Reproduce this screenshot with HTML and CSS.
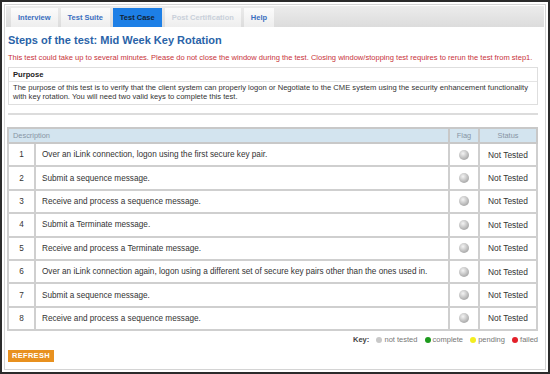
FILE: index.html
```html
<!DOCTYPE html>
<html>

<head>
    <meta name="viewport" content="width=device-width, initial-scale=1">
    <title>
        Steps of the test
    </title>
    <link rel="stylesheet" href="styles.css">
</head>

<body>
    <div class="frame">
        <div class="page">

            <div class="tabs">
                <span class="tab">Interview</span>
                <span class="tab">Test Suite</span>
                <span class="tab active">Test Case</span>
                <span class="tab disabled">Post Certification</span>
                <span class="tab">Help</span>
            </div>

            <div class="content">
                <h1 class="title">Steps of the test: Mid Week Key Rotation</h1>
                <p class="warning">This test could take up to several minutes. Please do not close the window during the test. Closing window/stopping test requires to rerun the test from step1.</p>

                <div class="purpose">
                    <div class="purpose-head">Purpose</div>
                    <div class="purpose-body">The purpose of this test is to verify that the client system can properly logon or Negotiate to the CME system using the security enhancement functionality with key rotation. You will need two valid keys to complete this test.</div>
                </div>

                <hr class="sep">

                <table class="steps">
                    <thead>
                        <tr>
                            <th colspan="2" class="th-desc">Description</th>
                            <th class="th-flag">Flag</th>
                            <th class="th-status">Status</th>
                        </tr>
                    </thead>
                    <tbody>
                        <tr>
                            <td class="num">1</td>
                            <td class="desc">Over an iLink connection, logon using the first secure key pair.</td>
                            <td class="flag"><span class="ball"></span></td>
                            <td class="status">Not Tested</td>
                        </tr>
                        <tr>
                            <td class="num">2</td>
                            <td class="desc">Submit a sequence message.</td>
                            <td class="flag"><span class="ball"></span></td>
                            <td class="status">Not Tested</td>
                        </tr>
                        <tr>
                            <td class="num">3</td>
                            <td class="desc">Receive and process a sequence message.</td>
                            <td class="flag"><span class="ball"></span></td>
                            <td class="status">Not Tested</td>
                        </tr>
                        <tr>
                            <td class="num">4</td>
                            <td class="desc">Submit a Terminate message.</td>
                            <td class="flag"><span class="ball"></span></td>
                            <td class="status">Not Tested</td>
                        </tr>
                        <tr>
                            <td class="num">5</td>
                            <td class="desc">Receive and process a Terminate message.</td>
                            <td class="flag"><span class="ball"></span></td>
                            <td class="status">Not Tested</td>
                        </tr>
                        <tr>
                            <td class="num">6</td>
                            <td class="desc">Over an iLink connection again, logon using a different set of secure key pairs other than the ones used in.</td>
                            <td class="flag"><span class="ball"></span></td>
                            <td class="status">Not Tested</td>
                        </tr>
                        <tr>
                            <td class="num">7</td>
                            <td class="desc">Submit a sequence message.</td>
                            <td class="flag"><span class="ball"></span></td>
                            <td class="status">Not Tested</td>
                        </tr>
                        <tr>
                            <td class="num">8</td>
                            <td class="desc">Receive and process a sequence message.</td>
                            <td class="flag"><span class="ball"></span></td>
                            <td class="status">Not Tested</td>
                        </tr>
                    </tbody>
                </table>

                <div class="key">
                    <b>Key:</b>
                    <span class="dot grey"></span> not tested
                    <span class="dot green"></span> complete
                    <span class="dot yellow"></span> pending
                    <span class="dot red"></span> failed
                </div>

                <div>
                    <span class="refresh">REFRESH</span>
                </div>
            </div>

        </div>
    </div>
</body>

</html>
```
FILE: styles.css
```css
html,
body {
    margin: 0;
    padding: 0;
    background: #fff;
}

body {
    font-family: "Liberation Sans", Arial, sans-serif;
    color: #333;
}

.frame {
    width: 550px;
    height: 374px;
    box-sizing: border-box;
    border: 2px solid #2b2b2b;
    padding: 2px;
}

.page {
    height: 100%;
    box-sizing: border-box;
    border: 1px solid #d4d4d4;
}

.tabs {
    display: flex;
    align-items: flex-end;
    gap: 3px;
    height: 21px;
    padding: 2px 0 0 5px;
    box-sizing: border-box;
    background: linear-gradient(#ececec, #dcdcdc);
    margin: 1px 1px 0 1px;
}

.tab {
    font-size: 7.5px;
    font-weight: bold;
    color: #3a6fc0;
    background: linear-gradient(#fbfbfb, #eeeeee);
    padding: 0 7px;
    height: 19px;
    line-height: 19px;
}

.tab.active {
    background: #1d7fe6;
    color: #123;
}

.tab.disabled {
    color: #c9d0da;
}

.content {
    padding: 0 7px 0 3px;
}

.title {
    margin: 6px 0 0 0;
    font-size: 11px;
    color: #2a63a8;
    font-weight: bold;
    line-height: 14px;
}

.warning {
    margin: 6px 0 0 0;
    font-size: 7.55px;
    color: #c8323a;
    line-height: 10px;
}

.purpose {
    margin-top: 4px;
    border: 1px solid #dedede;
    font-size: 7.6px;
}

.purpose-head {
    font-weight: bold;
    color: #222;
    padding: 2px 4px 1px 4px;
    border-bottom: 1px solid #e4e4e4;
    line-height: 10px;
}

.purpose-body {
    padding: 2px 4px 3px 4px;
    line-height: 8.5px;
    color: #333;
}

.sep {
    margin: 8px 0 0 0;
    border: none;
    border-top: 2px solid #dcdcdc;
}

.steps {
    margin-top: 12px;
    margin-left: -1px;
    width: calc(100% + 1px);
    border-collapse: collapse;
    border: 2px solid #c8c8c8;
    font-size: 8.2px;
}

.steps th {
    background: #d3e4ef;
    color: #8795a4;
    font-weight: normal;
    font-size: 7.4px;
    height: 13px;
    padding: 0 4px;
    border: 2px solid #c8c8c8;
}

.th-desc {
    text-align: left;
}

.steps td {
    border: 2px solid #cfcfcf;
    height: 21.4px;
    padding: 0 4px;
    color: #333;
}

.num {
    width: 17px;
    text-align: center;
}

.desc {
    padding-left: 6px !important;
}

.flag,
.th-flag {
    width: 20px;
    text-align: center;
}

.status,
.th-status {
    width: 48px;
    text-align: center;
}

.status {
    font-size: 8.4px;
}

.ball {
    display: inline-block;
    width: 10px;
    height: 10px;
    border-radius: 50%;
    background: radial-gradient(circle at 40% 35%, #f4f4f4, #b7b7b7 60%, #8f8f8f);
    vertical-align: middle;
}

.key {
    margin-top: 4px;
    text-align: right;
    font-size: 7.5px;
    color: #777;
}

.key b {
    color: #444;
}

.dot {
    display: inline-block;
    width: 6px;
    height: 6px;
    border-radius: 50%;
    margin-left: 5px;
    vertical-align: -1px;
}

.dot.grey {
    background: #c8c8c8;
}

.dot.green {
    background: #1d9a1d;
}

.dot.yellow {
    background: #f3ee20;
}

.dot.red {
    background: #e3202a;
}

.refresh {
    display: inline-block;
    margin-top: 3px;
    background: #e8911f;
    color: #fff;
    font-weight: bold;
    font-size: 7.5px;
    padding: 1px 4px;
    line-height: 10px;
    letter-spacing: 0.3px;
}
```
